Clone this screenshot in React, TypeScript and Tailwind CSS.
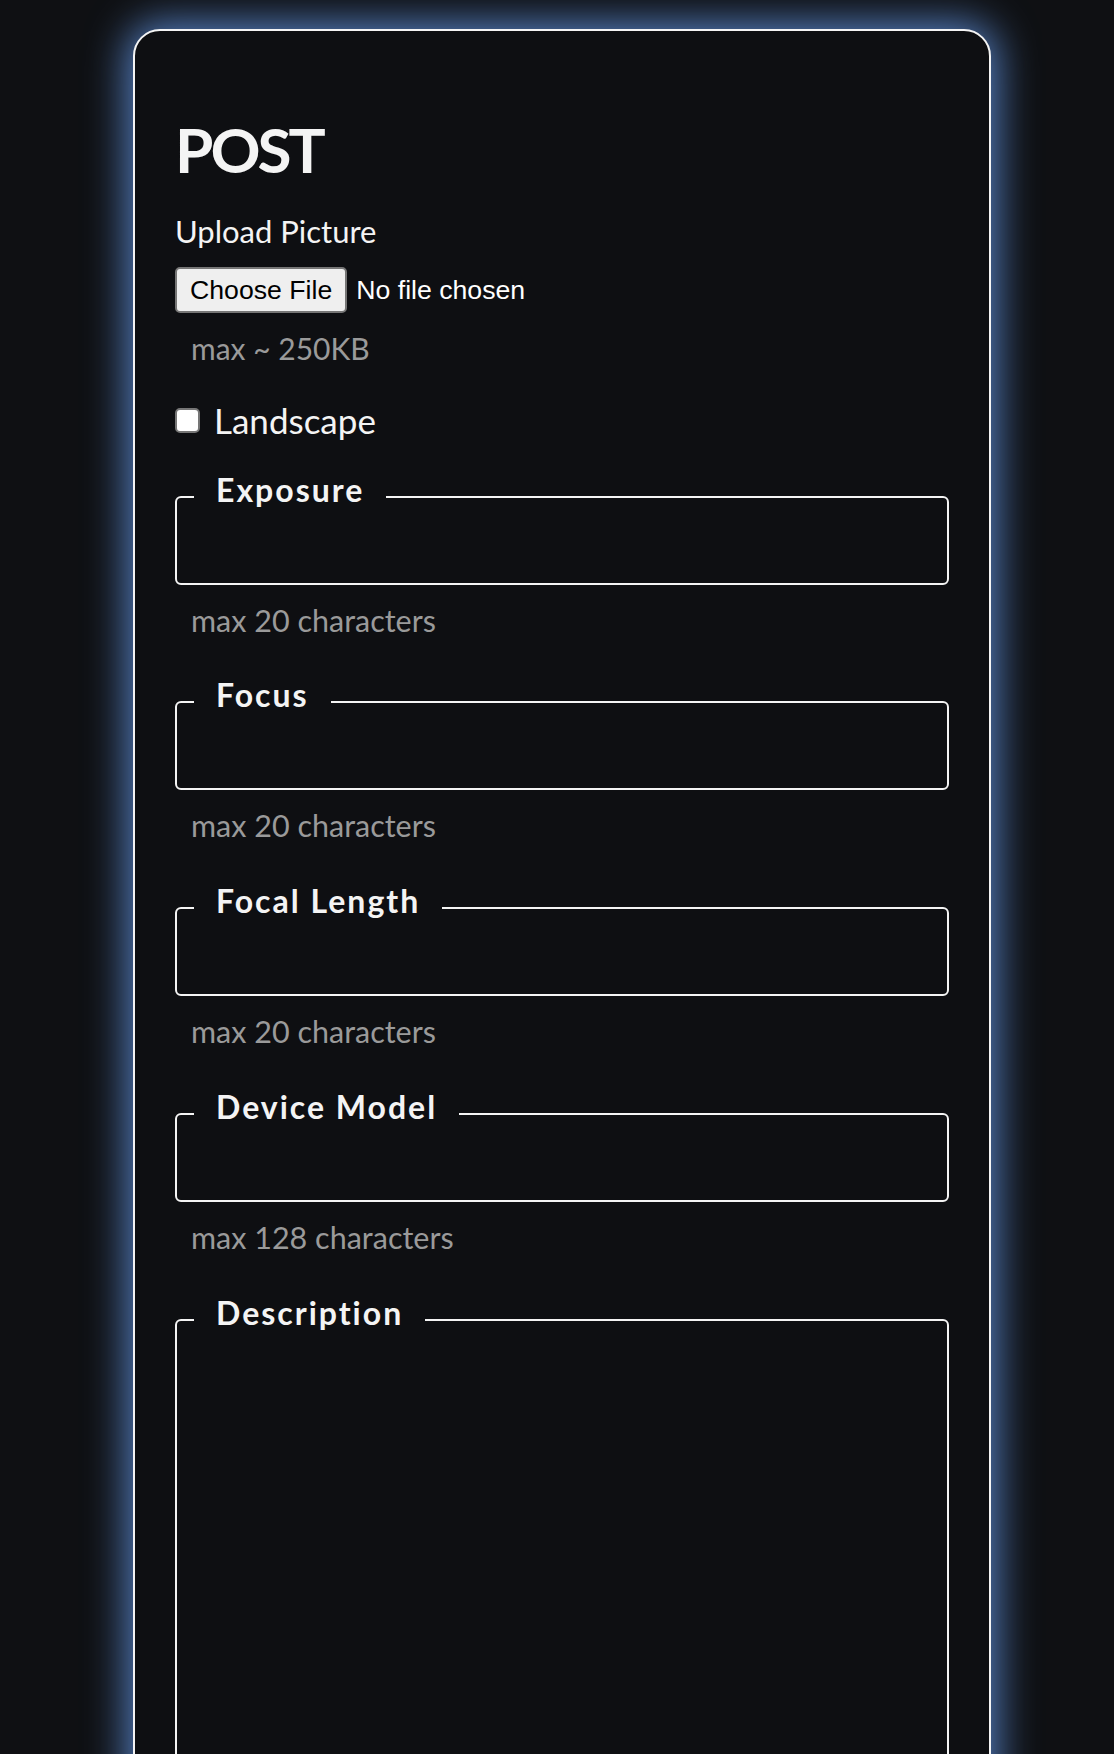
export default function App() {
  const fields = [
    { label: "Exposure", hint: "max 20 characters" },
    { label: "Focus", hint: "max 20 characters" },
    { label: "Focal Length", hint: "max 20 characters" },
    { label: "Device Model", hint: "max 128 characters" },
  ];

  return (
    <div className="min-h-screen overflow-hidden bg-[#0f1013] pt-[29px] pl-[10px] font-['Lato',sans-serif] text-[#f4f4f4]">
      <div className="mx-auto w-[858px] rounded-[27px] border-2 border-[#f4f4f4] bg-[#0e0f12] px-10 pt-[87px] pb-10 shadow-[0_0_40px_6px_rgba(90,135,205,0.95)]">
        <h1 className="text-[62px] font-bold leading-none tracking-[-3px]">POST</h1>

        <div className="mt-[31px] text-[31px] leading-[40px]">Upload Picture</div>
        <input
          type="file"
          className="mt-[16px] block font-['Liberation_Sans',sans-serif] text-[26.67px] leading-normal text-white file:mr-[9px] file:rounded-[5px] file:border-2 file:border-[#767676] file:bg-[#efefef] file:px-[13px] file:py-[1px] file:text-black"
        />
        <div className="mt-[13px] pl-4 text-[30px] text-[#9a9a9a]">max ~ 250KB</div>

        <label className="mt-[23px] flex items-center gap-[14px] text-[35px]">
          <input
            type="checkbox"
            className="h-[25px] w-[25px] appearance-none rounded-[5px] border-2 border-[#767676] bg-white"
          />
          Landscape
        </label>

        {fields.map((f, i) => (
          <div key={f.label} className={i === 0 ? "mt-[24px]" : "mt-[33px]"}>
            <fieldset className="rounded-[6px] border-2 border-[#f4f4f4]">
              <legend className="ml-[17px] px-[22px] pb-[14px] text-[32px] font-bold leading-[38px] tracking-[2px]">
                {f.label}
              </legend>
              <input type="text" className="block h-[60px] w-full bg-transparent px-4 text-[28px] outline-none" />
            </fieldset>
            <div className="mt-[13px] pl-4 text-[30.5px] text-[#9a9a9a]">{f.hint}</div>
          </div>
        ))}

        <fieldset className="mt-[33px] rounded-[6px] border-2 border-[#f4f4f4]">
          <legend className="ml-[17px] px-[22px] pb-[14px] text-[32px] font-bold leading-[38px] tracking-[2px]">
            Description
          </legend>
          <textarea className="block h-[600px] w-full resize-none bg-transparent px-4 text-[28px] outline-none" />
        </fieldset>
      </div>
    </div>
  );
}
